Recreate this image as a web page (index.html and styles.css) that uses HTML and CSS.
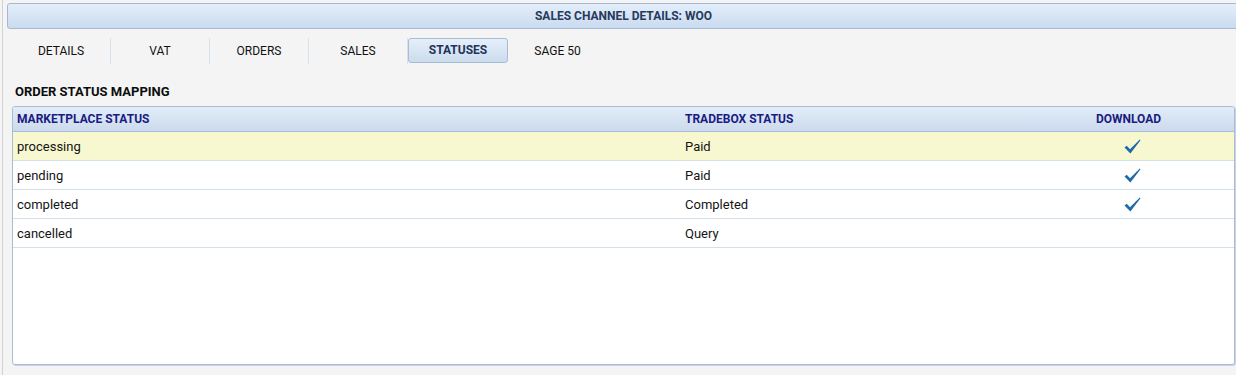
FILE: index.html
```html
<!DOCTYPE html>
<html lang="en">
<head>
    <meta charset="UTF-8">
    <title>Sales Channel Details</title>
    <link rel="stylesheet" href="styles.css">
</head>
<body>
    <div class="page">
        <div class="title-bar">SALES CHANNEL DETAILS: WOO</div>
        <div class="tabs">
            <div class="tab sep">DETAILS</div>
            <div class="tab sep">VAT</div>
            <div class="tab sep">ORDERS</div>
            <div class="tab sep">SALES</div>
            <div class="tab active">STATUSES</div>
            <div class="tab">SAGE 50</div>
        </div>
        <h2 class="section-title">ORDER STATUS MAPPING</h2>
        <div class="grid-box">
            <table class="status-table">
                <colgroup>
                    <col class="col-market">
                    <col class="col-tradebox">
                    <col>
                </colgroup>
                <thead>
                    <tr>
                        <th>MARKETPLACE STATUS</th>
                        <th>TRADEBOX STATUS</th>
                        <th class="center">DOWNLOAD</th>
                    </tr>
                </thead>
                <tbody>
                    <tr class="selected">
                        <td>processing</td>
                        <td>Paid</td>
                        <td class="center"><svg class="tick" width="17" height="15" viewBox="0 0 17 15"><path d="M0.5 8.5 L2.7 6.8 L6 10.2 L15.8 0.5 L16.5 1.3 L6.4 14.4 Z" fill="#1f6aa8"/></svg></td>
                    </tr>
                    <tr>
                        <td>pending</td>
                        <td>Paid</td>
                        <td class="center"><svg class="tick" width="17" height="15" viewBox="0 0 17 15"><path d="M0.5 8.5 L2.7 6.8 L6 10.2 L15.8 0.5 L16.5 1.3 L6.4 14.4 Z" fill="#1f6aa8"/></svg></td>
                    </tr>
                    <tr>
                        <td>completed</td>
                        <td>Completed</td>
                        <td class="center"><svg class="tick" width="17" height="15" viewBox="0 0 17 15"><path d="M0.5 8.5 L2.7 6.8 L6 10.2 L15.8 0.5 L16.5 1.3 L6.4 14.4 Z" fill="#1f6aa8"/></svg></td>
                    </tr>
                    <tr>
                        <td>cancelled</td>
                        <td>Query</td>
                        <td class="center"></td>
                    </tr>
                </tbody>
            </table>
        </div>
    </div>
</body>
</html>
```
FILE: styles.css
```css
body, html {
    margin: 0;
    padding: 0;
    height: 100%;
    overflow: hidden;
    background-color: #f4f4f4;
    font-family: Roboto, "Liberation Sans", sans-serif;
    font-size: 12px;
    color: #111111;
}
.page {
    height: 100%;
    margin-left: 2px;
    padding: 3px 0 0 4px;
    border-left: 1px solid #d2d2d2;
    box-sizing: border-box;
}
.title-bar {
    height: 24px;
    line-height: 24px;
    margin-right: -12px;
    border: 1px solid #a9b8d2;
    border-radius: 3px;
    background: linear-gradient(#e3eefb, #c9dbef);
    color: #283a5c;
    font-weight: bold;
    text-align: center;
    padding-right: 8px; /* keep text centred on the visible part */
}
.tabs {
    display: flex;
    margin: 9px 0 0 5px;
    height: 26px;
}
.tab {
    width: 99px;
    box-sizing: border-box;
    line-height: 26px;
    text-align: center;
    color: #111111;
}
.tab.sep {
    border-right: 1px solid #d6e1ee;
}
.tab.active {
    width: 100px;
    height: 25px;
    line-height: 23px;
    border: 1px solid #a8bcd6;
    border-radius: 3px;
    background: linear-gradient(#e6eff9, #cbdcee);
    color: #22345a;
    font-weight: bold;
}
.section-title {
    margin: 20px 0 0 8px;
    font-size: 13px;
    font-weight: bold;
    color: #0c0c0c;
    line-height: 16px;
}
.grid-box {
    margin: 6px 1px 0 5px;
    height: 259px;
    box-sizing: border-box;
    border: 1px solid #a9bcd7;
    border-radius: 3px;
    background-color: #ffffff;
    box-shadow: 1px 1px 0 #c8d4e2;
    overflow: hidden;
}
.status-table {
    width: 100%;
    border-collapse: collapse;
    table-layout: fixed;
}
.col-market {
    width: 668px;
}
.col-tradebox {
    width: 342px;
}
.status-table th {
    height: 24px;
    padding: 0 4px;
    text-align: left;
    font-size: 12px;
    font-weight: bold;
    color: #1b1b82;
    background: linear-gradient(#e2edf9, #cbdaed);
    border-bottom: 1px solid #a9bcd7;
}
.status-table td {
    height: 28px;
    padding: 0 4px;
    font-size: 13px;
    color: #141414;
    border-bottom: 1px solid #d3dfeb;
}
.status-table tr.selected td {
    background-color: #f8f8d0;
}
.status-table .center {
    text-align: center;
}
.tick {
    display: inline-block;
    vertical-align: middle;
    margin: 1px 0 0 8px;
}
```
